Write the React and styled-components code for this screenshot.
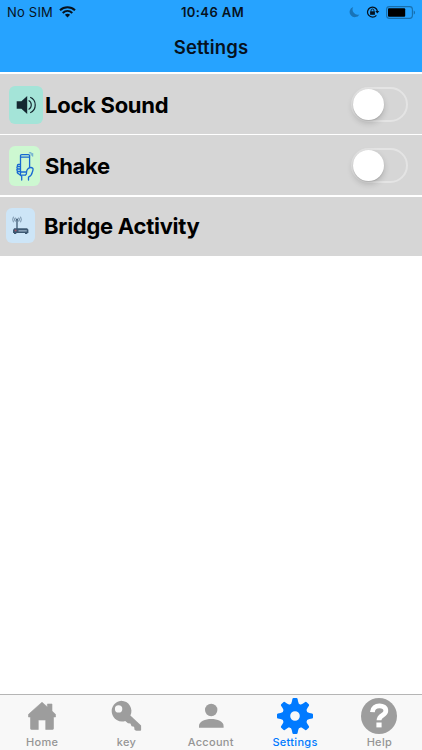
import React, { useState } from 'react'
import styled, { createGlobalStyle } from 'styled-components'

const GlobalStyle = createGlobalStyle`
  * {
    box-sizing: border-box;
  }

  body {
    margin: 0;
    background-color: #ffffff;
    font-family: Inter, "Liberation Sans", sans-serif;
  }
`

const Screen = styled.div`
  display: flex;
  flex-direction: column;
  width: 100%;
  height: 100vh;
  overflow: hidden;
`

const Header = styled.header`
  height: 72px;
  background-color: #26a3ff;
  color: #06121e;
`

const StatusBar = styled.div`
  display: grid;
  grid-template-columns: 1fr auto 1fr;
  align-items: center;
  height: 24px;
  padding: 0 6px 0 7px;
`

const Carrier = styled.div`
  display: flex;
  align-items: center;
  gap: 6px;
  font-size: 13px;
  letter-spacing: 0.2px;
`

const Clock = styled.div`
  padding-left: 2px;
  font-size: 13px;
  font-weight: 600;
  letter-spacing: 0.4px;
`

const StatusIcons = styled.div`
  display: flex;
  align-items: center;
  justify-content: flex-end;
  gap: 6px;
`

const Title = styled.h1`
  margin: 0;
  height: 48px;
  line-height: 47px;
  text-align: center;
  font-size: 18.5px;
  font-weight: 600;
  letter-spacing: 0.15px;
`

const List = styled.main`
  flex: 1;
  padding-top: 2px;
`

const Row = styled.div`
  display: flex;
  align-items: center;
  height: ${(props) => props.$height};
  margin-bottom: ${(props) => props.$gap};
  padding: ${(props) => props.$padding};
  background-color: #d6d6d6;
`

const Tile = styled.div`
  display: flex;
  align-items: center;
  justify-content: center;
  width: ${(props) => props.$width};
  height: ${(props) => props.$height};
  margin-right: ${(props) => props.$gap};
  border-radius: 6px;
  background-color: ${(props) => props.$color};
`

const RowLabel = styled.span`
  flex: 1;
  color: #000000;
  font-size: 22px;
  font-weight: 700;
  letter-spacing: -0.27px;
`

const Switch = styled.button`
  display: flex;
  justify-content: ${(props) => (props.$on ? 'flex-end' : 'flex-start')};
  align-items: center;
  width: 57px;
  height: 35px;
  margin-bottom: 2px;
  padding: 0;
  border: 2px solid ${(props) => (props.$on ? '#4cd964' : '#e4e4e4')};
  border-radius: 18px;
  background-color: ${(props) => (props.$on ? '#4cd964' : 'transparent')};
`

const Knob = styled.span`
  width: 31px;
  height: 31px;
  border-radius: 50%;
  background-color: #ffffff;
  box-shadow: 0 3px 6px rgba(0, 0, 0, 0.18), 0 1px 1px rgba(0, 0, 0, 0.1);
`

const TabBar = styled.nav`
  display: grid;
  grid-template-columns: repeat(5, 1fr);
  height: 56px;
  padding-right: 0.5px;
  border-top: 1px solid #b5b5b5;
  background-color: #f8f8f8;
`

const Tab = styled.div`
  display: flex;
  flex-direction: column;
  align-items: center;
  color: ${(props) => (props.$active ? '#007aff' : '#959595')};
`

const TabIcon = styled.div`
  display: flex;
  height: 40px;
`

const TabLabel = styled.span`
  font-size: 11px;
  line-height: 14px;
  font-weight: 500;
  letter-spacing: 0.3px;
`

const WifiIcon = () => (
  <svg width="17" height="12" viewBox="0 0 17 12" fill="none" stroke="#06121e">
    <path d="M1 4.2C5.2 .2 11.8 .2 16 4.2" strokeWidth="2" />
    <path d="M3.7 7C6.6 4.3 10.4 4.3 13.3 7" strokeWidth="2" />
    <path d="M8.5 11.4L5.9 8.8C7.4 7.5 9.6 7.5 11.1 8.8Z" fill="#06121e" stroke="none" />
  </svg>
)

const MoonIcon = () => (
  <svg width="11" height="12" viewBox="0 0 11 12">
    <path d="M4.2 1A5.2 5.2 0 1 0 10.4 8.4A5.2 5.2 0 0 1 4.2 1Z" fill="#1873b8" />
  </svg>
)

const RotationLockIcon = () => (
  <svg width="14" height="12" viewBox="0 0 14 12" fill="none" stroke="#06121e">
    <path d="M10.4 9.3A5 5 0 1 1 11.4 5" strokeWidth="1.2" />
    <path d="M9.3 5H13.3L11.3 7.6Z" fill="#06121e" stroke="none" />
    <rect x="4.1" y="5.3" width="4.8" height="3.5" fill="#06121e" stroke="none" />
    <path d="M5.1 5.5V4.4A1.4 1.4 0 0 1 7.9 4.4V5.5" strokeWidth="0.9" />
  </svg>
)

const BatteryIcon = () => (
  <svg width="30" height="13" viewBox="0 0 30 13">
    <rect x=".6" y=".6" width="25.8" height="11.8" rx="2.8" fill="none" stroke="#176fae" strokeWidth="1.1" />
    <rect x="2" y="2.2" width="17.2" height="8.6" rx="1" fill="#000000" />
    <path d="M27.7 4.4C29.5 5 29.5 8 27.7 8.6Z" fill="#176fae" />
  </svg>
)

const SoundIcon = () => (
  <svg width="20" height="20" viewBox="0 0 20 20" fill="none" stroke="#142730">
    <path d="M.7 6.2H5.4L11.2 .9V19L5.4 13.8H.7Z" fill="#142730" stroke="none" />
    <path d="M12.6 5.6C16.2 7.4 16.2 12.6 12.6 14.4" strokeWidth="1.1" />
    <path d="M14.2 2.2C20.9 5 20.9 15 14.2 17.8" strokeWidth="1.2" />
  </svg>
)

const ShakeIcon = () => (
  <svg width="18" height="29" viewBox="0 0 18 29" fill="none" stroke="#1768d2" strokeWidth="1.3" strokeLinecap="round" strokeLinejoin="round">
    <path d="M4.5 22.5V3.8Q4.5 2.6 5.7 2.6H12.4Q13.6 2.6 13.6 3.8V15" />
    <path d="M4.8 5.2H13.4M4.8 20H9.6" />
    <path d="M4.2 12.4H2.5Q1 12.7 1.6 14.2Q.4 15 1.4 16.7Q.2 17.7 1.5 19.2Q.7 20.6 2.2 21.6L5.7 24.2V28M4.3 14.5H2M4.3 17H1.8M4.3 19.5H2" />
    <path d="M9.2 23.2H5.5M9.3 23.2Q10.6 22.6 10.5 20.7Q10.3 18.3 12.2 16.6Q14.8 14.5 16.8 16.3Q17.5 17.3 16.3 20.2Q15.8 23.6 12.5 25.2V28" />
    <path d="M13.3 .8H15.2V3.3M16.7 1.5V4.2" strokeWidth=".6" />
  </svg>
)

const RouterIcon = () => (
  <svg width="17" height="19" viewBox="0 0 17 19" fill="none" stroke="#3d5872">
    <path d="M5 4V13" strokeWidth="1.3" />
    <path d="M3.3 1.7Q2.1 3.5 3.3 5.5M6.7 1.7Q7.9 3.5 6.7 5.5" strokeWidth=".8" />
    <path d="M1.5 .7Q-.1 3.5 1.5 6.3M8.5 .7Q10.1 3.5 8.5 6.3" strokeWidth=".6" />
    <circle cx="5" cy="3.5" r="1" fill="#3d5872" stroke="none" />
    <path d="M2.2 12.2H15.1L16.4 13.8V17H1V13.8Z" fill="#3d5872" stroke="none" />
    <path d="M6.5 14.9H14.8" stroke="#b7cee2" strokeWidth="1" />
    <circle cx="3.6" cy="14.6" r="1" fill="#a65768" stroke="none" />
    <path d="M2 17H4.3V18H2ZM13 17H15.3V18H13Z" fill="#3d5872" stroke="none" />
  </svg>
)

const HomeIcon = () => (
  <svg width="36" height="40" viewBox="0 0 36 40">
    <path d="M18 7.2L23.4 12V9H28V16L31.5 19.3V22H29.5V33.5Q29.5 34.5 28.5 34.5H21.7V25H14.3V34.5H7.5Q6.5 34.5 6.5 33.5V22H4.5V19.3Z" fill="#9d9d9d" stroke="#9d9d9d" strokeWidth=".6" strokeLinejoin="round" />
  </svg>
)

const KeyIcon = () => (
  <svg width="36" height="40" viewBox="0 0 36 40">
    <path fillRule="evenodd" d="M13.3 5.7A10.4 10.4 0 1 0 17.2 26L20 28.3L22.4 28.5L23.6 31.2L26.1 31.8L26.6 35L28.4 35.8H32.3Q33.1 35.8 33.1 35V30.6L22.4 20.6A10.4 10.4 0 0 0 13.3 5.7ZM10.6 10.2A3.7 3.7 0 1 1 10.6 17.6A3.7 3.7 0 0 1 10.6 10.2Z" fill="#9d9d9d" />
  </svg>
)

const AccountIcon = () => (
  <svg width="36" height="40" viewBox="0 0 36 40" fill="#9d9d9d">
    <circle cx="18.2" cy="15" r="6.2" />
    <path d="M6 32.8V31C6 21.7 30.6 21.7 30.6 31V32.8Z" />
  </svg>
)

const GearIcon = () => (
  <svg width="38" height="40" viewBox="-19 -21 38 40" fill="#007aff">
    {[0, 45, 90, 135, 180, 225, 270, 315].map((angle) => (
      <path
        key={angle}
        transform={`rotate(${angle})`}
        d="M-5.2 -11Q-3.4 -12.2 -3.1 -14.5L-2.6 -17.1Q-2.4 -18 -1.5 -18H1.5Q2.4 -18 2.6 -17.1L3.1 -14.5Q3.4 -12.2 5.2 -11Z"
      />
    ))}
    <circle r="8.7" fill="none" stroke="#007aff" strokeWidth="7.8" />
  </svg>
)

const HelpIcon = () => (
  <svg width="36" height="40" viewBox="0 0 36 40">
    <circle cx="18" cy="21" r="18" fill="#9d9d9d" />
    <path d="M11.4 17.2C11.7 8.8 25.2 9 24.8 16C24.7 20.4 18 20.2 18 25.3" fill="none" stroke="#ffffff" strokeWidth="4.8" />
    <rect x="15.4" y="27.5" width="5.2" height="4.9" fill="#ffffff" />
  </svg>
)

const tabs = [
  { label: 'Home', Icon: HomeIcon },
  { label: 'key', Icon: KeyIcon },
  { label: 'Account', Icon: AccountIcon },
  { label: 'Settings', Icon: GearIcon, active: true },
  { label: 'Help', Icon: HelpIcon },
]

function Toggle({ label }) {
  const [on, setOn] = useState(false)

  return (
    <Switch role="switch" aria-checked={on} aria-label={label} $on={on} onClick={() => setOn(!on)}>
      <Knob />
    </Switch>
  )
}

function App() {
  return (
    <Screen>
      <GlobalStyle />
      <Header>
        <StatusBar>
          <Carrier>
            No SIM
            <WifiIcon />
          </Carrier>
          <Clock>10:46 AM</Clock>
          <StatusIcons>
            <MoonIcon />
            <RotationLockIcon />
            <BatteryIcon />
          </StatusIcons>
        </StatusBar>
        <Title>Settings</Title>
      </Header>
      <List>
        <Row $height="60px" $gap="1px" $padding="2px 14px 0 9px">
          <Tile $width="34px" $height="38px" $gap="2px" $color="#a4e4d8">
            <SoundIcon />
          </Tile>
          <RowLabel>Lock Sound</RowLabel>
          <Toggle label="Lock Sound" />
        </Row>
        <Row $height="60px" $gap="2px" $padding="2px 14px 0 9px">
          <Tile $width="31px" $height="40px" $gap="5px" $color="#cdf8d1">
            <ShakeIcon />
          </Tile>
          <RowLabel>Shake</RowLabel>
          <Toggle label="Shake" />
        </Row>
        <Row $height="59px" $gap="0" $padding="0 14px 2px 6px">
          <Tile $width="29px" $height="35px" $gap="9px" $color="#cde5f7">
            <RouterIcon />
          </Tile>
          <RowLabel>Bridge Activity</RowLabel>
        </Row>
      </List>
      <TabBar>
        {tabs.map(({ label, Icon, active }) => (
          <Tab key={label} $active={active}>
            <TabIcon>
              <Icon />
            </TabIcon>
            <TabLabel>{label}</TabLabel>
          </Tab>
        ))}
      </TabBar>
    </Screen>
  )
}

export default App
